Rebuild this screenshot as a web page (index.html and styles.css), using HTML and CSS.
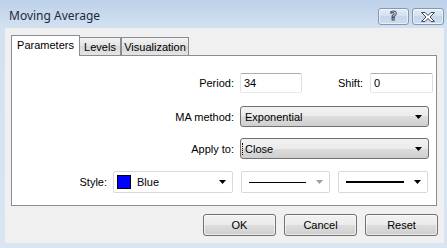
FILE: index.html
```html
<!DOCTYPE html>
<html lang="en">
<head>
    <meta charset="UTF-8">
    <title>Moving Average</title>
    <link rel="stylesheet" href="styles.css">
</head>
<body>
    <div class="window">
        <div class="titlebar">
            <span class="title">Moving Average</span>
            <div class="caption-btns">
                <span class="cap-btn help">?</span>
                <span class="cap-btn close">
                    <svg width="14" height="10" viewBox="0 0 14 10">
                        <polygon points="0.5,0.5 4,0.5 7,3.5 10,0.5 13.5,0.5 9,5 13.5,9.5 10,9.5 7,6.5 4,9.5 0.5,9.5 5,5" fill="#fff" stroke="#3c4a5e" stroke-width="1"/>
                    </svg>
                </span>
            </div>
        </div>

        <div class="client">
            <div class="tabs">
                <span class="tab active">Parameters</span>
                <span class="tab levels">Levels</span>
                <span class="tab">Visualization</span>
            </div>

            <div class="panel">
                <div class="row row-period">
                    <label class="lbl">Period:</label>
                    <span class="edit period">34</span>
                    <label class="lbl shift">Shift:</label>
                    <span class="edit shift-val">0</span>
                </div>

                <div class="row row-method">
                    <label class="lbl">MA method:</label>
                    <span class="select">Exponential<i class="arrow"></i></span>
                </div>

                <div class="row row-apply">
                    <label class="lbl">Apply to:</label>
                    <span class="select"><span class="focus">Close</span><i class="arrow"></i></span>
                </div>

                <div class="row row-style">
                    <label class="lbl style-lbl">Style:</label>
                    <span class="combo color"><span class="swatch"></span>Blue<i class="arrow"></i></span>
                    <span class="combo line"><span class="stroke thin"></span><i class="arrow dim"></i></span>
                    <span class="combo width"><span class="stroke thick"></span><i class="arrow"></i></span>
                </div>
            </div>

            <div class="buttons">
                <button class="btn">OK</button>
                <button class="btn">Cancel</button>
                <button class="btn">Reset</button>
            </div>
        </div>
    </div>
</body>
</html>
```

FILE: styles.css
```css
body {
    margin: 0;
    font-family: "Liberation Sans", Arial, sans-serif;
    font-size: 11px;
    color: #000;
}

.window {
    width: 447px;
    height: 248px;
    background: linear-gradient(#bdd1e9 0px, #d3e1f1 28px, #d9e5f2 100%);
    display: flex;
    flex-direction: column;
}

.titlebar {
    height: 28px;
    display: flex;
    align-items: flex-start;
    justify-content: space-between;
    padding: 0 3px 0 9px;
}

.title {
    font-family: "Noto Sans", "Open Sans", sans-serif;
    font-size: 12px;
    color: #1e2a3a;
    margin-top: 7px;
}

.caption-btns {
    display: flex;
    gap: 3px;
    margin-top: 8px;
}

.cap-btn {
    width: 29px;
    height: 15px;
    border: 1px solid #8598b3;
    border-radius: 3px;
    background: linear-gradient(#e4ecf6, #d2dfef 50%, #c7d6ea 50%, #cfdcee);
    box-shadow: inset 0 0 0 1px rgba(255, 255, 255, 0.55);
    display: flex;
    align-items: center;
    justify-content: center;
}

.cap-btn.close {
    width: 30px;
}

.help {
    font-family: "DejaVu Sans", sans-serif;
    font-weight: bold;
    font-size: 12px;
    color: #fff;
    -webkit-text-stroke: 1px #3c4a5e;
    line-height: 15px;
}

.client {
    margin: 0 3px 5px 5px;
    flex: 1;
    background: #f0f0f0;
    display: flex;
    flex-direction: column;
}

.tabs {
    display: flex;
    align-items: flex-end;
    height: 21px;
    margin: 7px 0 -1px 6px;
    position: relative;
}

.tab {
    height: 17px;
    margin-bottom: 1px;
    border: 1px solid #898c95;
    border-bottom: none;
    background: linear-gradient(#f2f2f2, #e3e3e3 50%, #d9d9d9 50%, #e4e4e4);
    display: flex;
    align-items: center;
    justify-content: center;
    box-sizing: content-box;
    padding: 0 5px;
}

.tab.active {
    width: 57px;
    height: 20px;
    margin-bottom: 0;
    background: #fff;
    align-items: flex-start;
    padding-top: 0;
    line-height: 19px;
}

.tab.levels {
    width: 30px;
    border-left: none;
}

.tab:last-child {
    width: 56px;
}

.panel {
    margin-left: 6px;
    width: 424px;
    height: 149px;
    border: 1px solid #898c95;
    background: #fff;
}

.row {
    display: flex;
    align-items: center;
}

.row-period {
    height: 20px;
    margin-top: 17px;
}

.row-method {
    height: 21px;
    margin-top: 13px;
}

.row-apply {
    height: 21px;
    margin-top: 11px;
}

.row-style {
    height: 22px;
    margin-top: 12px;
}

.lbl {
    width: 222px;
    margin-right: 6px;
    text-align: right;
}

.lbl.shift {
    width: 61px;
    margin-right: 7px;
}

.lbl.style-lbl {
    width: 95px;
}

.edit {
    height: 18px;
    border: 1px solid;
    border-color: #abadb3 #dbdfe6 #e3e9ef #e2e3ea;
    border-radius: 2px;
    padding-left: 3px;
    line-height: 18px;
}

.edit.period {
    width: 57px;
}

.edit.shift-val {
    width: 58px;
}

.select {
    width: 183px;
    height: 19px;
    border: 1px solid #707070;
    border-radius: 3px;
    background: linear-gradient(#f2f2f2, #ebebeb 50%, #dddddd 50%, #cfcfcf);
    padding-left: 4px;
    display: flex;
    align-items: center;
    position: relative;
}

.focus {
    border-left: 1px dotted #000;
    padding-left: 2px;
    margin-left: -3px;
}

.arrow {
    position: absolute;
    right: 6px;
    top: 8px;
    width: 7px;
    height: 4px;
    background: #000;
    clip-path: polygon(0 0, 100% 0, 50% 100%);
}

.arrow.dim {
    background: #a0a0a0;
}

.combo {
    height: 20px;
    border: 1px solid #d9d9d9;
    border-radius: 2px;
    background: #fff;
    display: flex;
    align-items: center;
    position: relative;
    margin-right: 8px;
}

.combo.color {
    width: 118px;
    margin-right: 8px;
}

.combo.line {
    width: 87px;
}

.combo.width {
    width: 88px;
}

.swatch {
    width: 12px;
    height: 12px;
    background: #0000ff;
    border: 1px solid #000;
    margin: 0 6px 0 3px;
}

.stroke {
    display: block;
    background: #000;
}

.stroke.thin {
    width: 57px;
    height: 1px;
    margin-left: 7px;
}

.stroke.thick {
    width: 58px;
    height: 2px;
    margin-left: 7px;
}

.buttons {
    display: flex;
    justify-content: flex-end;
    gap: 8px;
    margin-top: 8px;
    padding-right: 6px;
}

.btn {
    width: 73px;
    height: 22px;
    border: 1px solid #707070;
    border-radius: 3px;
    background: linear-gradient(#f2f2f2, #ebebeb 50%, #dddddd 50%, #cfcfcf);
    box-shadow: inset 0 0 0 1px rgba(255, 255, 255, 0.6);
    font-family: "Liberation Sans", Arial, sans-serif;
    font-size: 11px;
    color: #000;
    padding: 0;
}
```
